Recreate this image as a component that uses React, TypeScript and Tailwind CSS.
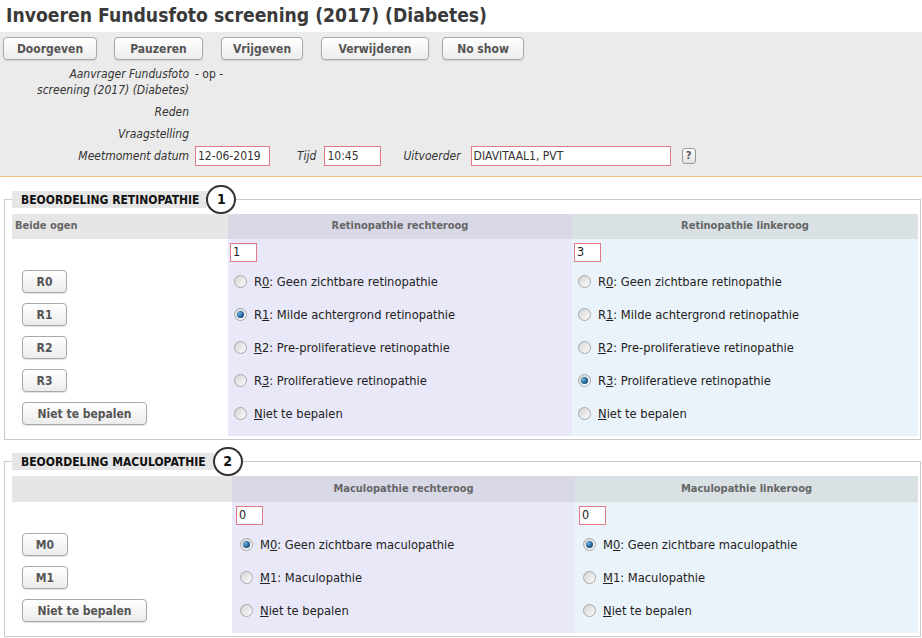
import React from "react";

type Option = { pre: string; u: string; post: string; checked?: boolean };

function Radio({ checked = false }: { checked?: boolean }) {
	return (
		<span className="relative inline-flex h-[13px] w-[13px] shrink-0 items-center justify-center rounded-full border border-[#a9a9a9] bg-gradient-to-br from-[#d4d4d4] to-[#fdfdfd]">
			{checked && (
				<span className="h-[7px] w-[7px] rounded-full bg-[radial-gradient(circle_at_35%_35%,#6fb3e0,#1d5b8c_60%,#0f3a60)]" />
			)}
		</span>
	);
}

function OptionRow({ opt, pl }: { opt: Option; pl: string }) {
	return (
		<div className={`flex h-[33px] items-center gap-[7px] text-[12.8px] ${pl}`}>
			<Radio checked={opt.checked} />
			<span>
				{opt.pre}
				<span className="underline">{opt.u}</span>
				{opt.post}
			</span>
		</div>
	);
}

function GrayButton({ label, w }: { label: string; w: string }) {
	return (
		<button
			className={`h-[23px] ${w} rounded-[4px] border border-[#a8a8a8] bg-gradient-to-b from-white to-[#ececec] text-[12px] font-bold text-[#555] shadow-[0_1px_1px_rgba(0,0,0,0.12)]`}
		>
			{label}
		</button>
	);
}

function Legend({ title, nr }: { title: string; nr: string }) {
	return (
		<legend>
			<div className="flex items-center">
				<span className="flex h-[17px] items-center bg-[#e6e6e6] pl-[9px] pr-[8px] text-[12px] font-bold text-[#111]">
					{title}
				</span>
				<span className="-ml-[1px] flex h-[29px] w-[30px] items-center justify-center rounded-full border-2 border-[#333] bg-white text-[14px] font-bold text-[#111]">
					{nr}
				</span>
			</div>
		</legend>
	);
}

function Section({
	title,
	nr,
	mt,
	cols,
	heads,
	right,
	left,
	buttons,
	headH,
	inputPl,
	optPl,
}: {
	title: string;
	nr: string;
	mt: string;
	cols: string;
	heads: string[];
	right: { value: string; options: Option[] };
	left: { value: string; options: Option[] };
	buttons: { label: string; w: string }[];
	headH: string;
	inputPl: string;
	optPl: string;
}) {
	return (
		<fieldset className={`ml-[4px] mr-[1px] ${mt} border border-[#cacaca] pb-[3px] pl-[7px] pr-[2px]`}>
			<Legend title={title} nr={nr} />
			<div className={`grid ${cols}`}>
				<div className={`flex ${headH} items-center bg-[#e6e6e6] pl-[3px] text-[11px] font-bold text-[#666]`}>
					{heads[0]}
				</div>
				<div className={`flex ${headH} items-center justify-center bg-[#d8d8e6] text-[11px] font-bold text-[#666]`}>
					{heads[1]}
				</div>
				<div className={`flex ${headH} items-center justify-center bg-[#d9e1e5] text-[11px] font-bold text-[#666]`}>
					{heads[2]}
				</div>

				<div className="flex flex-col bg-white pb-[6px] pl-[10px] pt-[26px]">
					{buttons.map((b) => (
						<div key={b.label} className="flex h-[33px] items-center">
							<GrayButton label={b.label} w={b.w} />
						</div>
					))}
				</div>
				{[right, left].map((side, i) => (
					<div
						key={i}
						className={`flex flex-col pb-[6px] ${i === 0 ? "bg-[#e8e8f8]" : "bg-[#eaf2fa]"}`}
					>
						<div className={`flex h-[26px] items-start pt-[4px] ${inputPl}`}>
							<span className="flex h-[19px] w-[27px] items-center border border-[#e07a86] bg-white pl-[2px] text-[12.5px]">
								{side.value}
							</span>
						</div>
						{side.options.map((o) => (
							<OptionRow key={o.pre + o.u + o.post} opt={o} pl={optPl} />
						))}
					</div>
				))}
			</div>
		</fieldset>
	);
}

const retinoRight: Option[] = [
	{ pre: "R", u: "0", post: ": Geen zichtbare retinopathie" },
	{ pre: "R", u: "1", post: ": Milde achtergrond retinopathie", checked: true },
	{ pre: "", u: "R", post: "2: Pre-proliferatieve retinopathie" },
	{ pre: "R", u: "3", post: ": Proliferatieve retinopathie" },
	{ pre: "", u: "N", post: "iet te bepalen" },
];

const retinoLeft: Option[] = retinoRight.map((o, i) => ({ ...o, checked: i === 3 }));

const maculo: Option[] = [
	{ pre: "M", u: "0", post: ": Geen zichtbare maculopathie", checked: true },
	{ pre: "", u: "M", post: "1: Maculopathie" },
	{ pre: "", u: "N", post: "iet te bepalen" },
];

export default function App(): JSX.Element {
	return (
		<div className="min-h-[638px] w-[922px] bg-white font-['DejaVu_Sans_Condensed','DejaVu_Sans',sans-serif] text-[12px] text-[#222]">
			<h1 className="h-[32px] pl-[6px] pt-[3px] text-[19.2px] font-bold leading-[26px] text-[#3a3a3a]">
				Invoeren Fundusfoto screening (2017) (Diabetes)
			</h1>

			<div className="h-[145px] border-b border-[#f0c27a] bg-[#ebebeb]">
				<div className="flex pl-[3px] pt-[5px]">
					<GrayButton label="Doorgeven" w="w-[94px]" />
					<span className="w-[17px]" />
					<GrayButton label="Pauzeren" w="w-[89px]" />
					<span className="w-[18px]" />
					<GrayButton label="Vrijgeven" w="w-[82px]" />
					<span className="w-[18px]" />
					<GrayButton label="Verwijderen" w="w-[108px]" />
					<span className="w-[13px]" />
					<GrayButton label="No show" w="w-[82px]" />
				</div>

				<div className="mt-[3px] grid grid-cols-[189px_1fr] gap-x-[6px] italic text-[#333]">
					<div className="py-[3px] text-right leading-[16px]">
						Aanvrager Fundusfoto
						<br />
						screening (2017) (Diabetes)
					</div>
					<div className="py-[3px] not-italic leading-[16px]">- op -</div>

					<div className="flex h-[22px] items-center justify-end">Reden</div>
					<div />

					<div className="flex h-[22px] items-center justify-end">Vraagstelling</div>
					<div />

					<div className="flex h-[22px] items-center justify-end">Meetmoment datum</div>
					<div className="flex h-[22px] items-center not-italic">
						<span className="flex h-[20px] w-[75px] items-center border border-[#e07a86] bg-white pl-[2px]">
							12-06-2019
						</span>
						<span className="ml-[27px] italic">Tijd</span>
						<span className="ml-[8px] flex h-[20px] w-[57px] items-center border border-[#e07a86] bg-white pl-[2px]">
							10:45
						</span>
						<span className="ml-[22px] italic">Uitvoerder</span>
						<span className="ml-[10px] flex h-[20px] w-[200px] items-center border border-[#e07a86] bg-white pl-[2px]">
							DIAVITAAL1, PVT
						</span>
						<span className="ml-[11px] flex h-[16px] w-[14px] items-center justify-center rounded-[3px] border border-[#999] bg-gradient-to-b from-white to-[#e2e2e2] text-[11px] font-bold text-[#555]">
							?
						</span>
					</div>
				</div>
			</div>

			<Section
				title="BEOORDELING RETINOPATHIE"
				nr="1"
				mt="mt-[8px]"
				cols="grid-cols-[216px_344px_346px]"
				heads={["Beide ogen", "Retinopathie rechteroog", "Retinopathie linkeroog"]}
				right={{ value: "1", options: retinoRight }}
				left={{ value: "3", options: retinoLeft }}
				buttons={[
					{ label: "R0", w: "w-[45px]" },
					{ label: "R1", w: "w-[45px]" },
					{ label: "R2", w: "w-[45px]" },
					{ label: "R3", w: "w-[45px]" },
					{ label: "Niet te bepalen", w: "w-[125px]" },
				]}
				headH="h-[25px]"
				inputPl="pl-[2px]"
				optPl="pl-[6px]"
			/>

			<Section
				title="BEOORDELING MACULOPATHIE"
				nr="2"
				mt="mt-[7px]"
				cols="grid-cols-[220px_343px_343px]"
				heads={["", "Maculopathie rechteroog", "Maculopathie linkeroog"]}
				right={{ value: "0", options: maculo }}
				left={{ value: "0", options: maculo }}
				buttons={[
					{ label: "M0", w: "w-[46px]" },
					{ label: "M1", w: "w-[46px]" },
					{ label: "Niet te bepalen", w: "w-[125px]" },
				]}
				headH="h-[26px]"
				inputPl="pl-[4px]"
				optPl="pl-[8px]"
			/>
		</div>
	);
}
